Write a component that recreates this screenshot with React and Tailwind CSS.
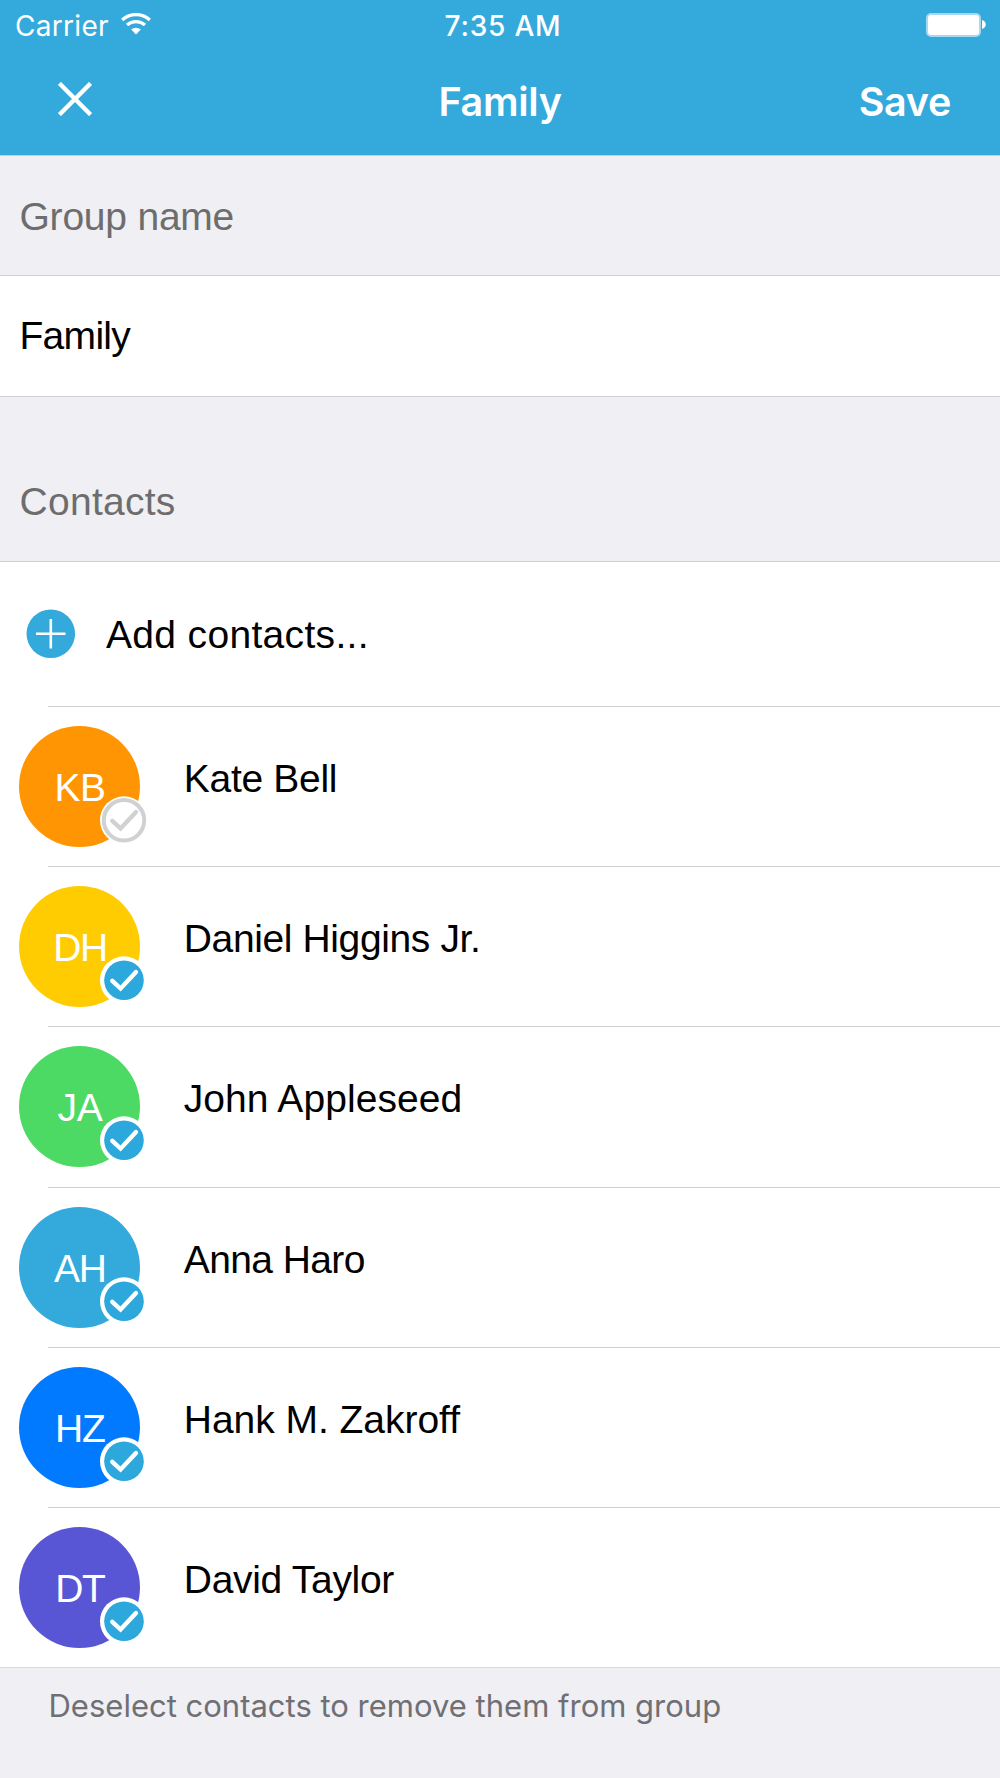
const contacts = [
  { initials: 'KB', name: 'Kate Bell', color: 'bg-[#ff9502]', height: 'h-[160px]', selected: false, tracking: 'tracking-[-0.3px]', badge: 'tracking-[-0.6px]' },
  { initials: 'DH', name: 'Daniel Higgins Jr.', color: 'bg-[#ffcc02]', height: 'h-[160px]', selected: true, tracking: 'tracking-[-0.38px]', badge: 'tracking-[-1.6px]' },
  { initials: 'JA', name: 'John Appleseed', color: 'bg-[#4cd964]', height: 'h-[161px]', selected: true, tracking: 'tracking-[0.06px]', badge: 'tracking-[-0.4px]' },
  { initials: 'AH', name: 'Anna Haro', color: 'bg-[#34a9dc]', height: 'h-[160px]', selected: true, tracking: 'tracking-[-0.6px]', badge: 'tracking-[-1.2px]' },
  { initials: 'HZ', name: 'Hank M. Zakroff', color: 'bg-[#027aff]', height: 'h-[160px]', selected: true, tracking: 'tracking-[-0.03px]', badge: 'tracking-[-1px]' },
  { initials: 'DT', name: 'David Taylor', color: 'bg-[#5856d5]', height: 'h-[160px]', selected: true, tracking: 'tracking-[-0.3px]', badge: 'tracking-[-1.4px]' },
];

function WifiIcon() {
  return (
    <svg className="ml-[12px] h-[22px] w-[30px]" viewBox="0 0 30 22" fill="none" stroke="#fff">
      <path d="M1.2 6.9a20.5 20.5 0 0 1 27.6 0" strokeWidth="3.4" />
      <path d="M6 12.1a13.5 13.5 0 0 1 18 0" strokeWidth="3.4" />
      <path d="M10.2 16.6a7.2 7.2 0 0 1 9.6 0L15 21.4z" fill="#fff" stroke="none" />
    </svg>
  );
}

function CheckBadge({ selected }) {
  return (
    <svg className="absolute top-[69px] left-[80px] h-[48px] w-[48px]" viewBox="0 0 48 48" fill="none">
      <circle cx="25" cy="25.3" r="24" fill="#fff" />
      {selected ? (
        <circle cx="25" cy="25.3" r="19.8" fill="#2da8dd" />
      ) : (
        <circle cx="25" cy="25.3" r="20.2" stroke="#d0d1d3" strokeWidth="4" />
      )}
      <path d="M13.3 25.8l8.3 7.7L37 17" stroke={selected ? '#fff' : '#d0d1d3'} strokeWidth="4.4" strokeLinecap="round" />
    </svg>
  );
}

function ContactRow({ contact, last }) {
  return (
    <li className={`${contact.height} flex flex-col`}>
      <div className="flex flex-1 items-start pl-[19.4px] pt-[19.3px]">
        <div className={`relative flex h-[121px] w-[121px] shrink-0 items-center justify-center rounded-full ${contact.color}`}>
          <span className={`pt-[2px] text-[39px] leading-[44px] text-white ${contact.badge}`}>{contact.initials}</span>
          <CheckBadge selected={contact.selected} />
        </div>
        <span className={`ml-[43.4px] mt-[31px] text-[39px] leading-[44px] whitespace-nowrap ${contact.tracking}`}>{contact.name}</span>
      </div>
      <div className={last ? 'h-px bg-[#dadadd]' : 'ml-[48px] h-px bg-[#d0d0d2]'} />
    </li>
  );
}

export default function App() {
  return (
    <div className="flex h-[1778px] w-[1000px] flex-col overflow-hidden bg-[#efeff4] font-['Liberation_Sans',Arial,sans-serif] text-black">
      <header className="h-[156px] shrink-0 border-b border-[#c9cfd8] bg-[#34a9dc] font-['Inter',sans-serif] text-white">
        <div className="grid h-[51px] grid-cols-3 items-center">
          <div className="flex items-center pl-[15px]">
            <span className="pt-px text-[28px] leading-[50px] tracking-[0.3px]">Carrier</span>
            <div className="mb-[3px]">
              <WifiIcon />
            </div>
          </div>
          <span className="pt-px pl-[6px] text-center text-[28px] leading-[50px] font-medium tracking-[0.8px]">7:35 AM</span>
          <div className="mb-[2px] flex items-center justify-end pr-[14px]">
            <div className="h-[24px] w-[55px] rounded-[5px] border-2 border-[#a5d9f0] bg-white" />
            <svg className="ml-px h-[9px] w-[4px]" viewBox="0 0 4 9">
              <path d="M0 0C5 1 5 8 0 9z" fill="#fff" />
            </svg>
          </div>
        </div>
        <div className="grid h-[101px] grid-cols-3 items-center">
          <button className="mb-[5px] ml-[58px] w-[34px]" aria-label="Close">
            <svg className="h-[34px] w-[34px]" viewBox="0 0 34 34" fill="none" stroke="#fff" strokeWidth="4.4">
              <path d="M1.4 1.4l31.2 31.2M32.6 1.4L1.4 32.6" />
            </svg>
          </button>
          <h1 className="text-center text-[39.5px] leading-[48px] font-semibold tracking-[-0.3px]">Family</h1>
          <button className="pr-[49px] text-right text-[39.5px] leading-[48px] font-semibold tracking-[-0.3px]">Save</button>
        </div>
      </header>

      <h2 className="h-[120px] shrink-0 border-b border-[#d0d0d4] pl-[19.5px] text-[39px] leading-[121px] tracking-[-0.22px] text-[#6d6d6d]">Group name</h2>
      <div className="h-[121px] shrink-0 border-b border-[#d0d0d4] bg-white pl-[19.5px] text-[39px] leading-[120px] tracking-[-0.7px]">Family</div>
      <h2 className="h-[165px] shrink-0 border-b border-[#d0d0d4] pt-[44px] pl-[19.5px] text-[39px] leading-[122px] tracking-[0.28px] text-[#6d6d6d]">Contacts</h2>

      <div className="flex h-[144px] shrink-0 items-center bg-white pl-[26px]">
        <svg className="h-[50px] w-[50px]" viewBox="0 0 50 50">
          <circle cx="24.8" cy="24.7" r="24.3" fill="#34a9dc" />
          <path d="M10 24.7h29.5M24.8 10v29.5" stroke="#fff" strokeWidth="2.6" />
        </svg>
        <span className="ml-[30px] pt-[2px] text-[39px] leading-[142px] tracking-[0.33px]">Add contacts...</span>
      </div>
      <div className="shrink-0 bg-white">
        <div className="ml-[48px] h-px bg-[#d0d0d2]" />
      </div>
      <ul className="shrink-0 bg-white">
        {contacts.map((contact, i) => (
          <ContactRow key={contact.initials} contact={contact} last={i === contacts.length - 1} />
        ))}
      </ul>
      <p className="pt-[14px] pl-[48.5px] text-[31px] leading-[48px] font-['Inter',sans-serif] text-[#6f6f74]">Deselect contacts to remove them from group</p>
    </div>
  );
}
